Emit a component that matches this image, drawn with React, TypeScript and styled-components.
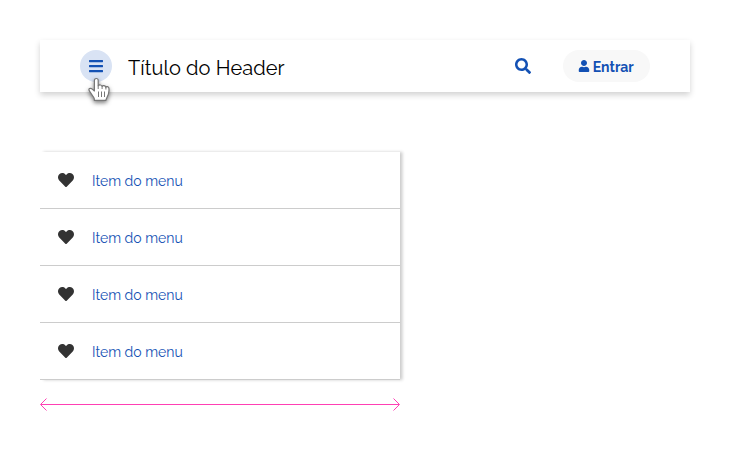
import React from "react";
import styled, { createGlobalStyle } from "styled-components";
import { FaBars, FaHeart, FaSearch, FaUser } from "react-icons/fa";

const GlobalStyle = createGlobalStyle`
  * { box-sizing: border-box; }
  body { margin: 0; background: #fff; font-family: Raleway, Lato, sans-serif; }
  svg { display: block; flex: none; }
`;

const Page = styled.main`
  height: 451px;
  padding: 40px;
  overflow: hidden;
`;

const Header = styled.header`
  display: flex;
  align-items: center;
  height: 52px;
  padding: 0 40px;
  background: #fff;
  color: #1351b4;
  box-shadow: 0 3px 6px rgba(0, 0, 0, 0.18);
`;

const MenuButton = styled.button`
  position: relative;
  display: grid;
  place-items: center;
  width: 32px;
  height: 32px;
  padding: 0;
  border: 0;
  border-radius: 50%;
  background: #d9e3f4;
  color: inherit;
`;

const Pointer = styled.svg`
  position: absolute;
  left: 7px;
  top: 27px;
  overflow: visible;
  filter: drop-shadow(0 2px 2px rgba(0, 0, 0, 0.5));
`;

const Title = styled.h1`
  flex: 1;
  margin: 3px 0 0 16px;
  color: #000;
  font-size: 20px;
  font-weight: 400;
  line-height: 28px;
  letter-spacing: 0.08px;
`;

const SearchButton = styled.button`
  padding: 0;
  margin-right: 32px;
  border: 0;
  background: none;
  color: inherit;
`;

const LoginButton = styled.button`
  display: flex;
  align-items: center;
  justify-content: center;
  gap: 2.5px;
  width: 87px;
  height: 32px;
  padding: 0 1px 0 0;
  border: 0;
  border-radius: 16px;
  background: #f8f8f8;
  color: inherit;
  font: 700 14px/20px Raleway, Lato, sans-serif;
`;

const LoginLabel = styled.span`
  padding-top: 2px;
`;

const Menu = styled.nav`
  width: 360px;
  margin-top: 60px;
  background: #fff;
  box-shadow: 2.5px 0 3px rgba(0, 0, 0, 0.2);
`;

const MenuItem = styled.a`
  display: flex;
  align-items: center;
  gap: 18px;
  height: 57px;
  padding-left: 18px;
  border-bottom: 1px solid #ccc;
  color: #1351b4;
  font-size: 14px;
  line-height: 20px;
`;

const ItemLabel = styled.span`
  padding-top: 2px;
`;

const Measure = styled.div`
  display: flex;
  align-items: center;
  width: 360px;
  height: 13px;
  margin-top: 18px;
`;

const MeasureLine = styled.div`
  flex: 1;
  height: 1px;
  margin: 0 -6px;
  background: #ff40b4;
`;

const items = ["Item do menu", "Item do menu", "Item do menu", "Item do menu"];

const HandPointer = () => (
  <Pointer width="24" height="26" viewBox="0 0 24 26">
    <path
      d="M9.3 1.5C7.9 1.5 7.4 2.4 7.4 3.5V14L5.3 12.1C4.1 11 2.5 11.1 2 12.1C1.6 13 2.2 13.8 3 14.9L6.8 20.5C7.3 21.3 7.4 22 7.4 23.4H18.8C18.8 21.8 22 18.5 22 13.5V11.7C22 9.4 19.2 8.9 18.9 10.4C18.6 8.4 15.5 8.1 15.1 9.5C14.8 7.7 12 7.5 11.2 8.8V3.5C11.2 2.3 10.6 1.5 9.3 1.5Z"
      fill="#fff"
      stroke="#777"
      strokeWidth="1.2"
      strokeLinejoin="round"
    />
    <path
      d="M11.2 8.5V12M15.1 9.2V12M18.9 10V12.5M11.5 14.5V20M14.5 14.5V20M17.5 14.5V20"
      fill="none"
      stroke="#777"
    />
  </Pointer>
);

const ArrowHead = ({ d }: { d: string }) => (
  <svg width="7" height="13" viewBox="0 0 7 13" fill="none" stroke="#ff40b4">
    <path d={d} />
  </svg>
);

export default function App() {
  return (
    <>
      <GlobalStyle />
      <Page>
        <Header>
          <MenuButton aria-label="Menu">
            <FaBars size={16} />
            <HandPointer />
          </MenuButton>
          <Title>Título do Header</Title>
          <SearchButton aria-label="Buscar">
            <FaSearch size={16} />
          </SearchButton>
          <LoginButton>
            <FaUser size={12} />
            <LoginLabel>Entrar</LoginLabel>
          </LoginButton>
        </Header>
        <Menu>
          {items.map((label, index) => (
            <MenuItem key={index}>
              <FaHeart size={16} color="#333" />
              <ItemLabel>{label}</ItemLabel>
            </MenuItem>
          ))}
        </Menu>
        <Measure>
          <ArrowHead d="M6.5 0.5L0.5 6.5L6.5 12.5" />
          <MeasureLine />
          <ArrowHead d="M0.5 0.5L6.5 6.5L0.5 12.5" />
        </Measure>
      </Page>
    </>
  );
}
